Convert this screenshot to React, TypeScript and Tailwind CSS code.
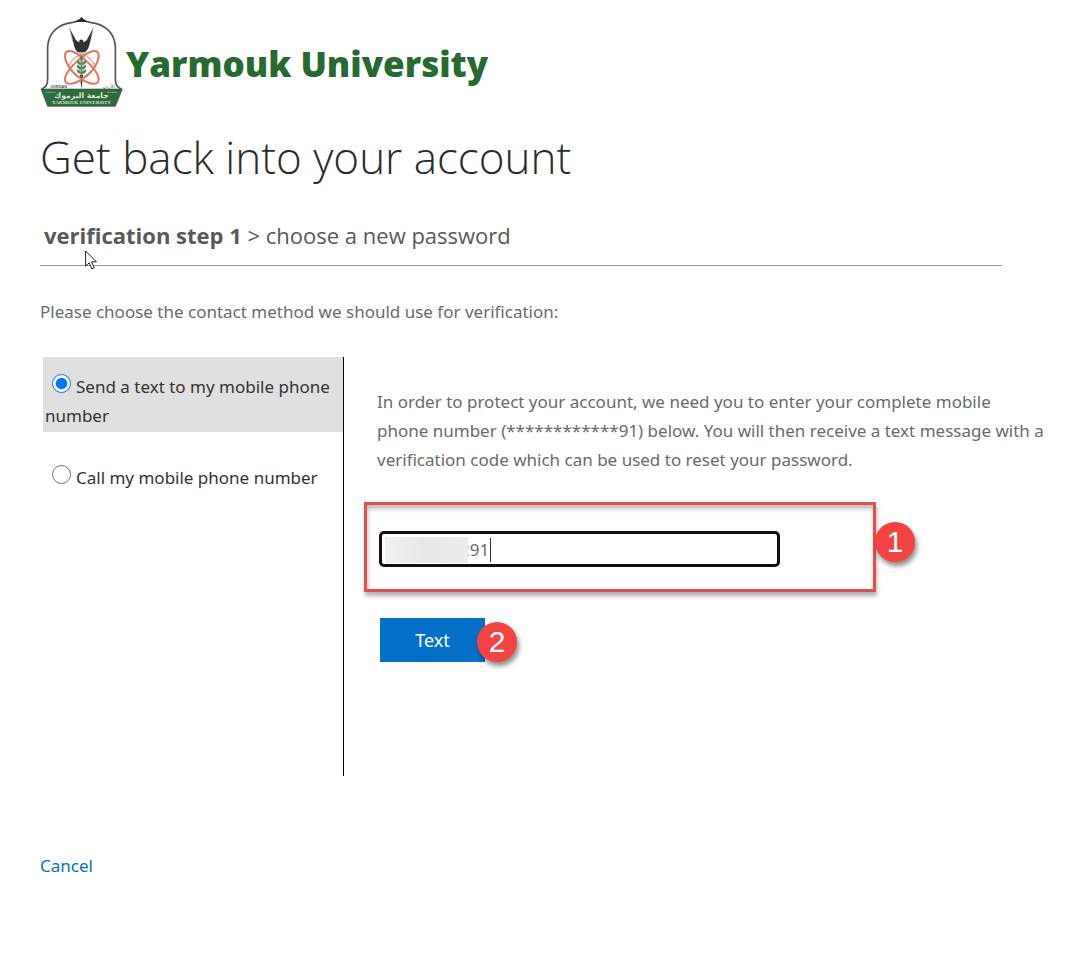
import React, { useState } from 'react'

const methods = [
  { id: 'text', label: 'Send a text to my mobile phone number' },
  { id: 'call', label: 'Call my mobile phone number' },
]

const Emblem = () => (
  <svg viewBox="30 34 248 274" className="h-[91px] w-[83px]" aria-hidden="true">
    {/* arch */}
    <path
      d="M34 254 Q52 248 52 226 V128 C54 84 84 58 128 53 Q146 50 154 41 Q162 50 180 53 C224 58 254 84 256 128 V226 Q256 248 274 254"
      fill="#fff"
      stroke="#555"
      strokeWidth="5"
    />
    <path d="M130 52 Q148 47 154 37 Q160 47 178 52 Z" fill="#2c2c2c" />
    {/* figure with raised arms */}
    <path
      d="M118 70 L137 106 L147 114 L147 110 Q148 105 153 105 Q159 105 160 110 L160 114 L170 106 L189 70 L180 112 Q176 134 166 142 L158 146 H150 L141 142 Q133 134 129 112 Z"
      fill="#303236"
    />
    <path d="M118 70 L128 112 M189 70 L181 112" stroke="#a0a3a5" strokeWidth="2" />
    <path d="M140 143 L150 222 L154 246 L158 222 L168 143 Z" fill="#d3d6d3" />
    <path d="M149 212 L154 254 L159 212 Z" fill="#333" />
    {/* atom orbits */}
    <g fill="none" stroke="#e37660" strokeWidth="6">
      <path d="M112 140 C94 146 108 188 142 215 C173 242 207 246 206 224 C204 202 174 170 144 150 Q125 137 112 140 Z" />
      <path d="M198 140 C216 146 202 188 168 215 C137 242 103 246 104 224 C106 202 136 170 166 150 Q185 137 198 140 Z" />
      <path d="M116 186 Q124 160 155 148 Q186 160 194 186 Q184 211 155 224 Q126 211 116 186 Z" strokeWidth="3" />
    </g>
    {/* wheat */}
    <g fill="#4f8c58">
      <path d="M154 151 Q163 161 154 172 Q145 161 154 151 Z" />
      <path d="M152 181 Q138 180 140 168 Q151 170 154 181 Q157 170 168 168 Q170 180 156 181 Z" />
      <path d="M152 195 Q138 194 140 181 Q151 184 154 194 Q157 184 168 181 Q170 194 156 195 Z" />
      <path d="M152 208 Q138 207 140 194 Q151 197 154 207 Q157 197 168 194 Q170 207 156 208 Z" />
      <path d="M152 168 H156 V220 H152 Z" />
    </g>
    {/* ribbon */}
    <path d="M32 254 H277 L256 306 H52 Z" fill="#2f6b3e" stroke="#285735" strokeWidth="2" />
    <path d="M46 264 H76 M232 264 H262" stroke="#91b598" strokeWidth="3" strokeDasharray="5 2" />
    <text x="60" y="251" fontSize="12" fontWeight="700" fill="#555" fontFamily="Liberation Sans">JORDAN</text>
    <text x="219" y="250" fontSize="14" fill="#555" fontFamily="DejaVu Sans">الأردن</text>
    <text x="154" y="280" textAnchor="middle" fontSize="23" fontWeight="700" fill="#dce9dc" fontFamily="DejaVu Sans">جامعة اليرموك</text>
    <text x="154" y="300" textAnchor="middle" fontSize="15" fontWeight="700" fill="#d3e1d3" fontFamily="Liberation Serif">YARMOUK UNIVERSITY</text>
  </svg>
)

const Pointer = () => (
  <svg viewBox="0 0 12 20" className="absolute top-[31px] left-[45px] h-5 w-3" aria-hidden="true">
    <path
      d="M.6 1 V16.2 L4.2 12.8 L6.8 18.8 L9.2 17.7 L6.7 11.8 H11.4 Z"
      fill="#fff"
      stroke="#222"
      strokeWidth="1"
    />
  </svg>
)

const StepBadge = ({ children, className }: { children: React.ReactNode; className: string }) => (
  <span
    className={`absolute flex size-10 items-center justify-center rounded-full bg-[#f54343] font-['Liberation_Sans'] text-[30px] leading-none text-white shadow-[2px_4px_5px_rgba(0,0,0,0.45)] ${className}`}
  >
    {children}
  </span>
)

const App = () => {
  const [method, setMethod] = useState('text')
  const [phone, setPhone] = useState('291')

  return (
    <main className="min-h-screen bg-white px-10 pt-4 pb-20 font-['Noto_Sans',sans-serif] text-[17px] leading-[29px] text-[#6b6b6b]">
      <header className="flex items-center gap-[3px]">
        <Emblem />
        <span className="pt-1 font-['Open_Sans'] text-[35px] font-extrabold leading-[46px] text-[#276a31]">
          Yarmouk University
        </span>
      </header>

      <h1 className="mt-4 font-['Open_Sans'] text-[44px] font-light leading-[68px] text-[#2b2b2b]">
        Get back into your account
      </h1>

      <div className="relative mt-7 mr-[46px] border-b border-[#999] px-1 pb-[14px] font-['Open_Sans'] text-[22px] leading-8 text-[#595959]">
        <strong className="font-bold">verification step 1</strong> &gt; choose a new password
        <Pointer />
      </div>

      <p className="mt-[31px]">Please choose the contact method we should use for verification:</p>

      <div className="mt-[31px] ml-[3px] flex min-h-[419px]">
        <div
          role="radiogroup"
          aria-label="Contact method"
          className="w-[301px] shrink-0 border-r border-black text-[#333]"
        >
          {methods.map((item) => (
            <label
              key={item.id}
              className={`mb-4 block px-[2px] pt-[15px] pb-[2px] ${
                method === item.id ? 'bg-[#e0e0e0]' : ''
              }`}
            >
              <input
                type="radio"
                name="method"
                className="mr-[5px] ml-[7px] size-[19px]"
                checked={method === item.id}
                onChange={() => setMethod(item.id)}
              />
              {item.label}
            </label>
          ))}
        </div>

        <section className="min-w-0 flex-1 pt-[30px] pl-[33px]">
          <p>
            In order to protect your account, we need you to enter your complete mobile
            <br />
            phone number (************91) below. You will then receive a text message with a
            verification code which can be used to reset your password.
          </p>

          <div className="relative mt-7 -ml-[13px] w-[512px] max-w-full border-3 border-[#e34e4e] px-3 pt-[26px] pb-[22px] shadow-[1px_4px_4px_rgba(0,0,0,0.3),inset_1px_4px_4px_rgba(0,0,0,0.25)]">
            <div className="relative w-[401px] max-w-full">
              <input
                type="text"
                aria-label="Mobile phone number"
                value={phone}
                onChange={(e) => setPhone(e.target.value)}
                className="block h-9 w-full rounded-[5px] border-3 border-[#111] bg-white pl-[78px] outline-none"
              />
              <span className="absolute top-[6px] left-[6px] h-[26px] w-[83px] bg-linear-to-r from-[#f1f1f1] via-[#e8e8e8] to-[#ededed]" />
              <span className="absolute top-[7px] left-[111px] h-6 w-px bg-[#333]" />
            </div>
            <StepBadge className="top-[17px] -right-[42px]">1</StepBadge>
          </div>

          <div className="relative mt-[26px] ml-[3px] w-[105px]">
            <button type="button" className="h-11 w-full bg-[#0670c8] text-[18px] text-white">
              Text
            </button>
            <StepBadge className="top-1 -right-8">2</StepBadge>
          </div>
        </section>
      </div>

      <a href="#" className="mt-[75px] inline-block text-[#0670c8]">
        Cancel
      </a>
    </main>
  )
}

export default App
